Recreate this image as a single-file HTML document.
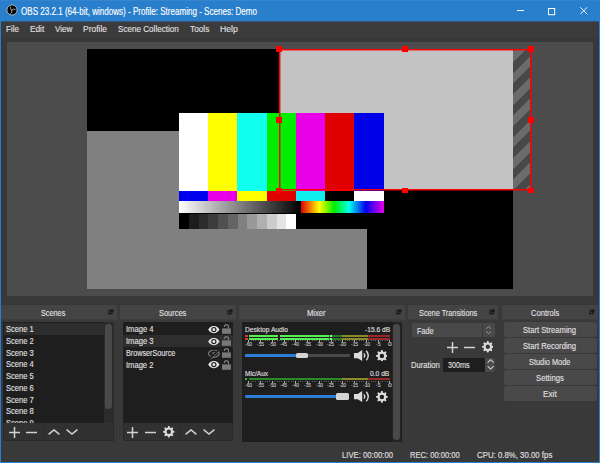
<!DOCTYPE html>
<html><head><meta charset="utf-8"><style>
html,body{margin:0;padding:0;width:600px;height:463px;overflow:hidden;background:#3a393a;}
body>div,body>svg{position:absolute;}
.t{font-family:"Liberation Sans", sans-serif;line-height:1;white-space:pre;-webkit-text-stroke:0.12px currentColor;}
</style></head><body>
<div style="left:0px;top:0px;width:600px;height:463px;background:#3a393a;"></div>
<div style="left:0px;top:0px;width:600px;height:21px;background:#2a7fcc;"></div>
<div style="left:0px;top:21px;width:600px;height:1px;background:#33567c;"></div>
<div style="left:1px;top:0px;width:598px;height:1px;background:#3485d0;"></div>
<div style="left:0px;top:0px;width:1px;height:463px;background:#2a7fcc;"></div>
<div style="left:599px;top:0px;width:1px;height:463px;background:#2a7fcc;"></div>
<div style="left:0px;top:462px;width:600px;height:1px;background:#2a7fcc;"></div>
<svg style="position:absolute;left:5.95px;top:4.4px" width="12" height="12" viewBox="0 0 12 12"><circle cx="6" cy="6" r="5.05" fill="#000" stroke="#d8d8d8" stroke-width="0.7"/><path d="M5.5 6.2 Q4.2 5.6 4.6 2.9 M5.8 5.9 Q7.3 4.6 9.3 5.2 M5.9 6.3 Q6.4 8.2 4.8 9.6" stroke="#bdbdbd" stroke-width="0.85" fill="none" stroke-linecap="round"/></svg>
<div class="t" style="left:20.52px;top:6.53px;font-size:10px;color:#fff;letter-spacing:0px;transform:scaleX(0.8055);transform-origin:0 0;">OBS 23.2.1 (64-bit, windows) - Profile: Streaming - Scenes: Demo</div>
<div style="left:517px;top:10px;width:7px;height:1px;background:#fff;"></div>
<svg style="position:absolute;left:548px;top:7.5px" width="8" height="8" viewBox="0 0 8 8"><rect x="0.5" y="0.5" width="6.2" height="6.2" fill="none" stroke="#fff" stroke-width="1"/></svg>
<svg style="position:absolute;left:579.8px;top:7.3px" width="8" height="8" viewBox="0 0 8 8"><path d="M0.3 0.3 L7.2 7.2 M7.2 0.3 L0.3 7.2" stroke="#fff" stroke-width="0.95"/></svg>
<div style="left:1px;top:22px;width:598px;height:16px;background:#3c3b3c;"></div>
<div class="t" style="left:6.21px;top:24.53px;font-size:9.3px;color:#e1e0e1;letter-spacing:0px;transform:scaleX(0.8778);transform-origin:0 0;">File</div>
<div class="t" style="left:29.71px;top:24.53px;font-size:9.3px;color:#e1e0e1;letter-spacing:0px;transform:scaleX(0.8864);transform-origin:0 0;">Edit</div>
<div class="t" style="left:54.72px;top:24.53px;font-size:9.3px;color:#e1e0e1;letter-spacing:0px;transform:scaleX(0.8680);transform-origin:0 0;">View</div>
<div class="t" style="left:82.79px;top:24.53px;font-size:9.3px;color:#e1e0e1;letter-spacing:0px;transform:scaleX(0.9135);transform-origin:0 0;">Profile</div>
<div class="t" style="left:117.71px;top:24.53px;font-size:9.3px;color:#e1e0e1;letter-spacing:0px;transform:scaleX(0.8720);transform-origin:0 0;">Scene Collection</div>
<div class="t" style="left:190.00px;top:24.53px;font-size:9.3px;color:#e1e0e1;letter-spacing:0px;transform:scaleX(0.8922);transform-origin:0 0;">Tools</div>
<div class="t" style="left:220.28px;top:24.53px;font-size:9.3px;color:#e1e0e1;letter-spacing:0px;transform:scaleX(0.9303);transform-origin:0 0;">Help</div>
<div style="left:1px;top:38px;width:598px;height:258px;background:#383838;"></div>
<div style="left:7px;top:42px;width:586px;height:254px;background:#4c4c4c;"></div>
<div style="left:87px;top:49px;width:426px;height:240px;background:#000;"></div>
<div style="left:87px;top:131px;width:280px;height:158px;background:#808080;"></div>
<div style="left:279px;top:49px;width:234px;height:140px;background:#c3c3c3;"></div>
<div style="left:513px;top:49px;width:18px;height:140px;background:repeating-linear-gradient(135deg,#484848 0 2.1px,#6b6b6b 2.1px 9.62px,#484848 9.62px 15.07px);"></div>
<div style="left:179px;top:113px;width:29px;height:78px;background:#fff;"></div>
<div style="left:208px;top:113px;width:29px;height:78px;background:#ffff00;"></div>
<div style="left:237px;top:113px;width:30px;height:78px;background:#11ffee;"></div>
<div style="left:267px;top:113px;width:29px;height:78px;background:#00ee00;"></div>
<div style="left:296px;top:113px;width:29px;height:78px;background:#e800e8;"></div>
<div style="left:325px;top:113px;width:29px;height:78px;background:#e00000;"></div>
<div style="left:354px;top:113px;width:30px;height:78px;background:#0000e8;"></div>
<div style="left:179px;top:191px;width:29px;height:10px;background:#0000ee;"></div>
<div style="left:208px;top:191px;width:29px;height:10px;background:#e800e8;"></div>
<div style="left:237px;top:191px;width:30px;height:10px;background:#ffff00;"></div>
<div style="left:267px;top:191px;width:29px;height:10px;background:#e00000;"></div>
<div style="left:296px;top:191px;width:29px;height:10px;background:#11eeee;"></div>
<div style="left:325px;top:191px;width:29px;height:10px;background:#000;"></div>
<div style="left:354px;top:191px;width:30px;height:10px;background:#fff;"></div>
<div style="left:179px;top:201px;width:205px;height:28px;background:#000;"></div>
<div style="left:179px;top:201px;width:122px;height:12px;background:linear-gradient(90deg,#fff,#000);"></div>
<div style="left:301px;top:201px;width:83px;height:12px;background:linear-gradient(90deg,#e00000,#ffff00 22%,#00ee00 40%,#00ffee 58%,#0000ee 78%,#e800e8);"></div>
<div style="left:179.0px;top:214.4px;width:9.75px;height:14.2px;background:#000;"></div>
<div style="left:188.75px;top:214.4px;width:9.75px;height:14.2px;background:#1c1c1c;"></div>
<div style="left:198.5px;top:214.4px;width:9.75px;height:14.2px;background:#2c2c2c;"></div>
<div style="left:208.25px;top:214.4px;width:9.75px;height:14.2px;background:#3c3c3c;"></div>
<div style="left:218.0px;top:214.4px;width:9.75px;height:14.2px;background:#505050;"></div>
<div style="left:227.75px;top:214.4px;width:9.75px;height:14.2px;background:#646464;"></div>
<div style="left:237.5px;top:214.4px;width:9.75px;height:14.2px;background:#808080;"></div>
<div style="left:247.25px;top:214.4px;width:9.75px;height:14.2px;background:#999999;"></div>
<div style="left:257.0px;top:214.4px;width:9.75px;height:14.2px;background:#b0b0b0;"></div>
<div style="left:266.75px;top:214.4px;width:9.75px;height:14.2px;background:#cccccc;"></div>
<div style="left:276.5px;top:214.4px;width:9.75px;height:14.2px;background:#e4e4e4;"></div>
<div style="left:286.25px;top:214.4px;width:9.75px;height:14.2px;background:#ffffff;"></div>
<div style="left:279px;top:49px;width:252px;height:1px;background:#f00;"></div>
<div style="left:280px;top:50px;width:251px;height:1px;background:rgba(255,0,0,0.45);"></div>
<div style="left:279px;top:189px;width:252px;height:1px;background:#f00;"></div>
<div style="left:279px;top:190px;width:253px;height:1px;background:rgba(255,0,0,0.45);"></div>
<div style="left:279px;top:50px;width:1px;height:139px;background:#f00;"></div>
<div style="left:280px;top:51px;width:1px;height:138px;background:rgba(255,0,0,0.45);"></div>
<div style="left:530px;top:50px;width:1px;height:139px;background:#f00;"></div>
<div style="left:531px;top:49px;width:1px;height:141px;background:rgba(255,0,0,0.45);"></div>
<div style="left:276.34999999999997px;top:46.25px;width:5.7px;height:5.7px;background:#f00;"></div>
<div style="left:402.45px;top:46.25px;width:5.7px;height:5.7px;background:#f00;"></div>
<div style="left:528.35px;top:46.25px;width:5.7px;height:5.7px;background:#f00;"></div>
<div style="left:276.34999999999997px;top:116.85000000000001px;width:5.7px;height:5.7px;background:#f00;"></div>
<div style="left:528.35px;top:116.85000000000001px;width:5.7px;height:5.7px;background:#f00;"></div>
<div style="left:276.34999999999997px;top:187.55px;width:5.7px;height:5.7px;background:#f00;"></div>
<div style="left:402.45px;top:187.55px;width:5.7px;height:5.7px;background:#f00;"></div>
<div style="left:528.35px;top:187.55px;width:5.7px;height:5.7px;background:#f00;"></div>
<div style="left:1px;top:305px;width:116px;height:14px;background:#454445;"></div>
<div style="left:1px;top:319px;width:116px;height:1px;background:#3e3d3e;"></div>
<div style="left:1px;top:304px;width:116px;height:1px;background:#383738;"></div>
<div class="t" style="left:41.26px;top:308.82px;font-size:8.6px;color:#e1e0e1;letter-spacing:0px;transform:scaleX(0.8469);transform-origin:0 0;">Scenes</div>
<svg style="position:absolute;left:108px;top:309.3px" width="6" height="6" viewBox="0 0 6 6"><path d="M2.2 1.0 H4.9 V3.6" stroke="#111" stroke-width="1.1" fill="none"/><rect x="1.0" y="1.9" width="2.8" height="2.9" fill="none" stroke="#111" stroke-width="1.1"/></svg>
<div style="left:120px;top:305px;width:116px;height:14px;background:#454445;"></div>
<div style="left:120px;top:319px;width:116px;height:1px;background:#3e3d3e;"></div>
<div style="left:120px;top:304px;width:116px;height:1px;background:#383738;"></div>
<div class="t" style="left:158.85px;top:308.82px;font-size:8.6px;color:#e1e0e1;letter-spacing:0px;transform:scaleX(0.8657);transform-origin:0 0;">Sources</div>
<svg style="position:absolute;left:227px;top:309.3px" width="6" height="6" viewBox="0 0 6 6"><path d="M2.2 1.0 H4.9 V3.6" stroke="#111" stroke-width="1.1" fill="none"/><rect x="1.0" y="1.9" width="2.8" height="2.9" fill="none" stroke="#111" stroke-width="1.1"/></svg>
<div style="left:239px;top:305px;width:166px;height:14px;background:#454445;"></div>
<div style="left:239px;top:319px;width:166px;height:1px;background:#3e3d3e;"></div>
<div style="left:239px;top:304px;width:166px;height:1px;background:#383738;"></div>
<div class="t" style="left:307.34px;top:308.82px;font-size:8.6px;color:#e1e0e1;letter-spacing:0px;transform:scaleX(0.8855);transform-origin:0 0;">Mixer</div>
<svg style="position:absolute;left:396px;top:309.3px" width="6" height="6" viewBox="0 0 6 6"><path d="M2.2 1.0 H4.9 V3.6" stroke="#111" stroke-width="1.1" fill="none"/><rect x="1.0" y="1.9" width="2.8" height="2.9" fill="none" stroke="#111" stroke-width="1.1"/></svg>
<div style="left:408px;top:305px;width:90px;height:14px;background:#454445;"></div>
<div style="left:408px;top:319px;width:90px;height:1px;background:#3e3d3e;"></div>
<div style="left:408px;top:304px;width:90px;height:1px;background:#383738;"></div>
<div class="t" style="left:418.86px;top:308.82px;font-size:8.6px;color:#e1e0e1;letter-spacing:0px;transform:scaleX(0.8518);transform-origin:0 0;">Scene Transitions</div>
<svg style="position:absolute;left:489px;top:309.3px" width="6" height="6" viewBox="0 0 6 6"><path d="M2.2 1.0 H4.9 V3.6" stroke="#111" stroke-width="1.1" fill="none"/><rect x="1.0" y="1.9" width="2.8" height="2.9" fill="none" stroke="#111" stroke-width="1.1"/></svg>
<div style="left:502px;top:305px;width:96px;height:14px;background:#454445;"></div>
<div style="left:502px;top:319px;width:96px;height:1px;background:#3e3d3e;"></div>
<div style="left:502px;top:304px;width:96px;height:1px;background:#383738;"></div>
<div class="t" style="left:531.35px;top:308.82px;font-size:8.6px;color:#e1e0e1;letter-spacing:0px;transform:scaleX(0.8815);transform-origin:0 0;">Controls</div>
<svg style="position:absolute;left:589px;top:309.3px" width="6" height="6" viewBox="0 0 6 6"><path d="M2.2 1.0 H4.9 V3.6" stroke="#111" stroke-width="1.1" fill="none"/><rect x="1.0" y="1.9" width="2.8" height="2.9" fill="none" stroke="#111" stroke-width="1.1"/></svg>
<div style="left:3px;top:322px;width:111px;height:101px;background:#1f1e1f;"></div>
<div style="left:4px;top:323px;width:100px;height:12px;background:#2f2e2f;"></div>
<div style="left:104px;top:322px;width:10px;height:101px;background:#2d2c2d;"></div>
<div style="left:105px;top:324.3px;width:7.2px;height:85px;background:#4a494a;border-radius:3.6px;"></div>
<div class="t" style="left:5.74px;top:325.03px;font-size:8.7px;color:#e1e0e1;letter-spacing:0px;transform:scaleX(0.8719);transform-origin:0 0;">Scene 1</div>
<div class="t" style="left:5.74px;top:336.80px;font-size:8.7px;color:#e1e0e1;letter-spacing:0px;transform:scaleX(0.8719);transform-origin:0 0;">Scene 2</div>
<div class="t" style="left:5.74px;top:348.57px;font-size:8.7px;color:#e1e0e1;letter-spacing:0px;transform:scaleX(0.8719);transform-origin:0 0;">Scene 3</div>
<div class="t" style="left:5.74px;top:360.34px;font-size:8.7px;color:#e1e0e1;letter-spacing:0px;transform:scaleX(0.8719);transform-origin:0 0;">Scene 4</div>
<div class="t" style="left:5.74px;top:372.11px;font-size:8.7px;color:#e1e0e1;letter-spacing:0px;transform:scaleX(0.8719);transform-origin:0 0;">Scene 5</div>
<div class="t" style="left:5.74px;top:383.88px;font-size:8.7px;color:#e1e0e1;letter-spacing:0px;transform:scaleX(0.8719);transform-origin:0 0;">Scene 6</div>
<div class="t" style="left:5.74px;top:395.65px;font-size:8.7px;color:#e1e0e1;letter-spacing:0px;transform:scaleX(0.8719);transform-origin:0 0;">Scene 7</div>
<div class="t" style="left:5.74px;top:407.42px;font-size:8.7px;color:#e1e0e1;letter-spacing:0px;transform:scaleX(0.8719);transform-origin:0 0;">Scene 8</div>
<div class="t" style="left:5.74px;top:419.19px;font-size:8.7px;color:#e1e0e1;letter-spacing:0px;transform:scaleX(0.8719);transform-origin:0 0;">Scene 9</div>
<div style="left:3px;top:423px;width:111px;height:18px;background:#2a292a;"></div>
<div style="left:4px;top:423px;width:109px;height:17px;background:#323132;"></div>
<div style="left:43px;top:425px;width:1px;height:15px;background:#2a292a;"></div>
<div style="left:123px;top:322px;width:110px;height:101px;background:#1f1e1f;"></div>
<div style="left:123px;top:335px;width:110px;height:12px;background:#2f2e2f;"></div>
<div class="t" style="left:125.64px;top:325.23px;font-size:8.7px;color:#e1e0e1;letter-spacing:0px;transform:scaleX(0.8796);transform-origin:0 0;">Image 4</div>
<div class="t" style="left:125.64px;top:337.03px;font-size:8.7px;color:#e1e0e1;letter-spacing:0px;transform:scaleX(0.8796);transform-origin:0 0;">Image 3</div>
<div class="t" style="left:125.67px;top:348.83px;font-size:8.7px;color:#e1e0e1;letter-spacing:0px;transform:scaleX(0.8314);transform-origin:0 0;">BrowserSource</div>
<div class="t" style="left:125.64px;top:360.63px;font-size:8.7px;color:#e1e0e1;letter-spacing:0px;transform:scaleX(0.8731);transform-origin:0 0;">Image 2</div>
<div style="left:123px;top:423px;width:110px;height:18px;background:#2a292a;"></div>
<div style="left:124px;top:423px;width:108px;height:17px;background:#323132;"></div>
<div style="left:179.4px;top:425px;width:1px;height:15px;background:#2a292a;"></div>
<svg style="position:absolute;left:8.5px;top:426.5px" width="11" height="11" viewBox="0 0 11 11"><path d="M0 5.5 H11 M5.5 0 V11" stroke="#d2d2d2" stroke-width="1.5"/></svg>
<svg style="position:absolute;left:26.0px;top:426.5px" width="11" height="11" viewBox="0 0 11 11"><path d="M0 5.5 H11" stroke="#d2d2d2" stroke-width="1.5"/></svg>
<svg style="position:absolute;left:48px;top:429px" width="12" height="6.5" viewBox="0 0 12 6.5"><path d="M0.6 5.4 L6 0.9 L11.4 5.4" stroke="#d2d2d2" stroke-width="1.5" fill="none"/></svg>
<svg style="position:absolute;left:66px;top:429px" width="12" height="6.5" viewBox="0 0 12 6.5"><path d="M0.6 0.6 L6 5.1 L11.4 0.6" stroke="#d2d2d2" stroke-width="1.5" fill="none"/></svg>
<svg style="position:absolute;left:127.0px;top:426.5px" width="11" height="11" viewBox="0 0 11 11"><path d="M0 5.5 H11 M5.5 0 V11" stroke="#d2d2d2" stroke-width="1.5"/></svg>
<svg style="position:absolute;left:145.2px;top:426.5px" width="11" height="11" viewBox="0 0 11 11"><path d="M0 5.5 H11" stroke="#d2d2d2" stroke-width="1.5"/></svg>
<svg style="position:absolute;left:163.29999999999998px;top:426.09999999999997px" width="11.6" height="11.6" viewBox="0 0 11.6 11.6"><polygon points="4.48,1.96 5.16,0.04 6.44,0.04 7.12,1.96 7.59,2.15 9.43,1.27 10.33,2.17 9.45,4.01 9.64,4.48 11.56,5.16 11.56,6.44 9.64,7.12 9.45,7.59 10.33,9.43 9.43,10.33 7.59,9.45 7.12,9.64 6.44,11.56 5.16,11.56 4.48,9.64 4.01,9.45 2.17,10.33 1.27,9.43 2.15,7.59 1.96,7.12 0.04,6.44 0.04,5.16 1.96,4.48 2.15,4.01 1.27,2.17 2.17,1.27 4.01,2.15" fill="#dcdcdc"/><circle cx="5.8" cy="5.8" r="4.06" fill="#dcdcdc"/><circle cx="5.8" cy="5.8" r="2.2039999999999997" fill="#323132"/></svg>
<svg style="position:absolute;left:185px;top:429px" width="12" height="6.5" viewBox="0 0 12 6.5"><path d="M0.6 5.4 L6 0.9 L11.4 5.4" stroke="#d2d2d2" stroke-width="1.5" fill="none"/></svg>
<svg style="position:absolute;left:203px;top:429px" width="12" height="6.5" viewBox="0 0 12 6.5"><path d="M0.6 0.6 L6 5.1 L11.4 0.6" stroke="#d2d2d2" stroke-width="1.5" fill="none"/></svg>
<svg style="position:absolute;left:208.25px;top:326.0px" width="11.7" height="10" viewBox="0 0 11.7 10"><path d="M0.2 3.6 C1.6 0.9 3.8 -0.1 5.85 -0.1 C7.9 -0.1 10.1 0.9 11.5 3.6 C10.1 6.3 7.9 7.3 5.85 7.3 C3.8 7.3 1.6 6.3 0.2 3.6 Z" fill="#e6e6e6"/><circle cx="5.85" cy="3.6" r="2.1" fill="none" stroke="#1f1e1f" stroke-width="1.15"/></svg>
<svg style="position:absolute;left:222.1px;top:324.1px" width="9" height="10" viewBox="0 0 9 10"><rect x="0" y="4.4" width="8.9" height="5.4" fill="#7a797a"/><path d="M2.4 2.9 Q2.4 0.65 4.35 0.65 Q6.5 0.65 6.5 2.9 V4.6" stroke="#7a797a" stroke-width="1.3" fill="none"/></svg>
<svg style="position:absolute;left:208.25px;top:337.8px" width="11.7" height="10" viewBox="0 0 11.7 10"><path d="M0.2 3.6 C1.6 0.9 3.8 -0.1 5.85 -0.1 C7.9 -0.1 10.1 0.9 11.5 3.6 C10.1 6.3 7.9 7.3 5.85 7.3 C3.8 7.3 1.6 6.3 0.2 3.6 Z" fill="#e6e6e6"/><circle cx="5.85" cy="3.6" r="2.1" fill="none" stroke="#1f1e1f" stroke-width="1.15"/></svg>
<svg style="position:absolute;left:222.1px;top:335.90000000000003px" width="9" height="10" viewBox="0 0 9 10"><rect x="0" y="4.4" width="8.9" height="5.4" fill="#7a797a"/><path d="M2.4 2.9 Q2.4 0.65 4.35 0.65 Q6.5 0.65 6.5 2.9 V4.6" stroke="#7a797a" stroke-width="1.3" fill="none"/></svg>
<svg style="position:absolute;left:208.25px;top:349.6px" width="11.7" height="10" viewBox="0 0 11.7 10"><path d="M0.2 3.6 C1.6 0.9 3.8 -0.1 5.85 -0.1 C7.9 -0.1 10.1 0.9 11.5 3.6 C10.1 6.3 7.9 7.3 5.85 7.3 C3.8 7.3 1.6 6.3 0.2 3.6 Z" fill="none" stroke="#747374" stroke-width="1.3"/><circle cx="5.85" cy="3.6" r="1.5" fill="#747374"/><path d="M1.6 8.6 L10.6 0.4" stroke="#1f1e1f" stroke-width="1.8"/><path d="M2.4 9.4 L11.4 1.2" stroke="#747374" stroke-width="0.9"/></svg>
<svg style="position:absolute;left:222.1px;top:347.70000000000005px" width="9" height="10" viewBox="0 0 9 10"><rect x="0" y="4.4" width="8.9" height="5.4" fill="#7a797a"/><path d="M2.4 2.9 Q2.4 0.65 4.35 0.65 Q6.5 0.65 6.5 2.9 V4.6" stroke="#7a797a" stroke-width="1.3" fill="none"/></svg>
<svg style="position:absolute;left:208.25px;top:361.4px" width="11.7" height="10" viewBox="0 0 11.7 10"><path d="M0.2 3.6 C1.6 0.9 3.8 -0.1 5.85 -0.1 C7.9 -0.1 10.1 0.9 11.5 3.6 C10.1 6.3 7.9 7.3 5.85 7.3 C3.8 7.3 1.6 6.3 0.2 3.6 Z" fill="#e6e6e6"/><circle cx="5.85" cy="3.6" r="2.1" fill="none" stroke="#1f1e1f" stroke-width="1.15"/></svg>
<svg style="position:absolute;left:222.1px;top:359.5px" width="9" height="10" viewBox="0 0 9 10"><rect x="0" y="4.4" width="8.9" height="5.4" fill="#7a797a"/><path d="M2.4 2.9 Q2.4 0.65 4.35 0.65 Q6.5 0.65 6.5 2.9 V4.6" stroke="#7a797a" stroke-width="1.3" fill="none"/></svg>
<div style="left:242px;top:322px;width:160px;height:119.8px;background:#1f1e1f;"></div>
<div style="left:392px;top:322px;width:9px;height:119.8px;background:#252425;"></div>
<div style="left:393.2px;top:324.1px;width:7.1px;height:116px;background:#4a494a;border-radius:3.55px;"></div>
<div class="t" style="left:244.90px;top:326.17px;font-size:7.6px;color:#e1e0e1;letter-spacing:0px;transform:scaleX(0.8765);transform-origin:0 0;">Desktop Audio</div>
<div class="t" style="left:364.60px;top:326.17px;font-size:7.6px;color:#e1e0e1;letter-spacing:0px;transform:scaleX(0.8787);transform-origin:0 0;">-15.6 dB</div>
<div class="t" style="left:245.31px;top:370.17px;font-size:7.6px;color:#e1e0e1;letter-spacing:0px;transform:scaleX(0.8520);transform-origin:0 0;">Mic/Aux</div>
<div class="t" style="left:370.20px;top:370.17px;font-size:7.6px;color:#e1e0e1;letter-spacing:0px;transform:scaleX(0.8801);transform-origin:0 0;">0.0 dB</div>
<div style="left:248.7px;top:334.7px;width:93.5px;height:5px;background:#2a7a2a;"></div>
<div style="left:342.2px;top:334.7px;width:25.80000000000001px;height:5px;background:#8a8a2a;"></div>
<div style="left:368px;top:334.7px;width:21.69999999999999px;height:5px;background:#9a2a2a;"></div>
<div style="left:248.7px;top:334.7px;width:80.60000000000002px;height:5px;background:#55f055;"></div>
<div style="left:278px;top:334.7px;width:2px;height:5px;background:#000;"></div>
<div style="left:330px;top:334.7px;width:2px;height:5px;background:#88ff88;"></div>
<div style="left:248.7px;top:337px;width:141.0px;height:0.7px;background:#1f1e1f;"></div>
<div style="left:245px;top:334.8px;width:2.5px;height:2.2px;background:#e03535;"></div>
<div style="left:245px;top:337.8px;width:2.5px;height:2.2px;background:#e03535;"></div>
<div style="left:248.7px;top:378.2px;width:93.5px;height:2px;background:#2a8a2a;"></div>
<div style="left:342.2px;top:378.2px;width:25.80000000000001px;height:2px;background:#8a8a2a;"></div>
<div style="left:368px;top:378.2px;width:21.69999999999999px;height:2px;background:#9a2a2a;"></div>
<div style="left:245.3px;top:378.2px;width:1.8px;height:2px;background:#30c030;"></div>
<div style="left:248.29999999999998px;top:340.2px;width:0.9px;height:2.3px;background:#b0b0b0;"></div>
<div style="left:250.64999999999998px;top:340.2px;width:0.8px;height:1.1px;background:#606060;"></div>
<div style="left:252.99999999999997px;top:340.2px;width:0.8px;height:1.1px;background:#606060;"></div>
<div style="left:255.35px;top:340.2px;width:0.8px;height:1.1px;background:#606060;"></div>
<div style="left:257.7px;top:340.2px;width:0.8px;height:1.1px;background:#606060;"></div>
<div style="left:260.05px;top:340.2px;width:0.9px;height:2.3px;background:#b0b0b0;"></div>
<div style="left:262.40000000000003px;top:340.2px;width:0.8px;height:1.1px;background:#606060;"></div>
<div style="left:264.75px;top:340.2px;width:0.8px;height:1.1px;background:#606060;"></div>
<div style="left:267.1px;top:340.2px;width:0.8px;height:1.1px;background:#606060;"></div>
<div style="left:269.45px;top:340.2px;width:0.8px;height:1.1px;background:#606060;"></div>
<div style="left:271.8px;top:340.2px;width:0.9px;height:2.3px;background:#b0b0b0;"></div>
<div style="left:274.15000000000003px;top:340.2px;width:0.8px;height:1.1px;background:#606060;"></div>
<div style="left:276.5px;top:340.2px;width:0.8px;height:1.1px;background:#606060;"></div>
<div style="left:278.85px;top:340.2px;width:0.8px;height:1.1px;background:#606060;"></div>
<div style="left:281.2px;top:340.2px;width:0.8px;height:1.1px;background:#606060;"></div>
<div style="left:283.55px;top:340.2px;width:0.9px;height:2.3px;background:#b0b0b0;"></div>
<div style="left:285.90000000000003px;top:340.2px;width:0.8px;height:1.1px;background:#606060;"></div>
<div style="left:288.25px;top:340.2px;width:0.8px;height:1.1px;background:#606060;"></div>
<div style="left:290.6px;top:340.2px;width:0.8px;height:1.1px;background:#606060;"></div>
<div style="left:292.95px;top:340.2px;width:0.8px;height:1.1px;background:#606060;"></div>
<div style="left:295.3px;top:340.2px;width:0.9px;height:2.3px;background:#b0b0b0;"></div>
<div style="left:297.65000000000003px;top:340.2px;width:0.8px;height:1.1px;background:#606060;"></div>
<div style="left:300.0px;top:340.2px;width:0.8px;height:1.1px;background:#606060;"></div>
<div style="left:302.35px;top:340.2px;width:0.8px;height:1.1px;background:#606060;"></div>
<div style="left:304.7px;top:340.2px;width:0.8px;height:1.1px;background:#606060;"></div>
<div style="left:307.05px;top:340.2px;width:0.9px;height:2.3px;background:#b0b0b0;"></div>
<div style="left:309.40000000000003px;top:340.2px;width:0.8px;height:1.1px;background:#606060;"></div>
<div style="left:311.75px;top:340.2px;width:0.8px;height:1.1px;background:#606060;"></div>
<div style="left:314.1px;top:340.2px;width:0.8px;height:1.1px;background:#606060;"></div>
<div style="left:316.45000000000005px;top:340.2px;width:0.8px;height:1.1px;background:#606060;"></div>
<div style="left:318.8px;top:340.2px;width:0.9px;height:2.3px;background:#b0b0b0;"></div>
<div style="left:321.15px;top:340.2px;width:0.8px;height:1.1px;background:#606060;"></div>
<div style="left:323.5px;top:340.2px;width:0.8px;height:1.1px;background:#606060;"></div>
<div style="left:325.85px;top:340.2px;width:0.8px;height:1.1px;background:#606060;"></div>
<div style="left:328.20000000000005px;top:340.2px;width:0.8px;height:1.1px;background:#606060;"></div>
<div style="left:330.55px;top:340.2px;width:0.9px;height:2.3px;background:#b0b0b0;"></div>
<div style="left:332.9px;top:340.2px;width:0.8px;height:1.1px;background:#606060;"></div>
<div style="left:335.25px;top:340.2px;width:0.8px;height:1.1px;background:#606060;"></div>
<div style="left:337.6px;top:340.2px;width:0.8px;height:1.1px;background:#606060;"></div>
<div style="left:339.95000000000005px;top:340.2px;width:0.8px;height:1.1px;background:#606060;"></div>
<div style="left:342.3px;top:340.2px;width:0.9px;height:2.3px;background:#b0b0b0;"></div>
<div style="left:344.65px;top:340.2px;width:0.8px;height:1.1px;background:#606060;"></div>
<div style="left:347.0px;top:340.2px;width:0.8px;height:1.1px;background:#606060;"></div>
<div style="left:349.35px;top:340.2px;width:0.8px;height:1.1px;background:#606060;"></div>
<div style="left:351.70000000000005px;top:340.2px;width:0.8px;height:1.1px;background:#606060;"></div>
<div style="left:354.05px;top:340.2px;width:0.9px;height:2.3px;background:#b0b0b0;"></div>
<div style="left:356.4px;top:340.2px;width:0.8px;height:1.1px;background:#606060;"></div>
<div style="left:358.75px;top:340.2px;width:0.8px;height:1.1px;background:#606060;"></div>
<div style="left:361.1px;top:340.2px;width:0.8px;height:1.1px;background:#606060;"></div>
<div style="left:363.45000000000005px;top:340.2px;width:0.8px;height:1.1px;background:#606060;"></div>
<div style="left:365.8px;top:340.2px;width:0.9px;height:2.3px;background:#b0b0b0;"></div>
<div style="left:368.15px;top:340.2px;width:0.8px;height:1.1px;background:#606060;"></div>
<div style="left:370.5px;top:340.2px;width:0.8px;height:1.1px;background:#606060;"></div>
<div style="left:372.85px;top:340.2px;width:0.8px;height:1.1px;background:#606060;"></div>
<div style="left:375.20000000000005px;top:340.2px;width:0.8px;height:1.1px;background:#606060;"></div>
<div style="left:377.55px;top:340.2px;width:0.9px;height:2.3px;background:#b0b0b0;"></div>
<div style="left:379.9px;top:340.2px;width:0.8px;height:1.1px;background:#606060;"></div>
<div style="left:382.25px;top:340.2px;width:0.8px;height:1.1px;background:#606060;"></div>
<div style="left:384.6px;top:340.2px;width:0.8px;height:1.1px;background:#606060;"></div>
<div style="left:386.95000000000005px;top:340.2px;width:0.8px;height:1.1px;background:#606060;"></div>
<div style="left:389.3px;top:340.2px;width:0.9px;height:2.3px;background:#b0b0b0;"></div>
<div class="t" style="left:245.06px;top:342.36px;font-size:5.6px;color:#c8c8c8;letter-spacing:0px;transform:scaleX(0.8763);transform-origin:0 0;">-60</div>
<div class="t" style="left:256.81px;top:342.36px;font-size:5.6px;color:#c8c8c8;letter-spacing:0px;transform:scaleX(0.8763);transform-origin:0 0;">-55</div>
<div class="t" style="left:268.56px;top:342.36px;font-size:5.6px;color:#c8c8c8;letter-spacing:0px;transform:scaleX(0.8763);transform-origin:0 0;">-50</div>
<div class="t" style="left:280.31px;top:342.36px;font-size:5.6px;color:#c8c8c8;letter-spacing:0px;transform:scaleX(0.8763);transform-origin:0 0;">-45</div>
<div class="t" style="left:292.06px;top:342.36px;font-size:5.6px;color:#c8c8c8;letter-spacing:0px;transform:scaleX(0.8763);transform-origin:0 0;">-40</div>
<div class="t" style="left:303.81px;top:342.36px;font-size:5.6px;color:#c8c8c8;letter-spacing:0px;transform:scaleX(0.8763);transform-origin:0 0;">-35</div>
<div class="t" style="left:315.56px;top:342.36px;font-size:5.6px;color:#c8c8c8;letter-spacing:0px;transform:scaleX(0.8763);transform-origin:0 0;">-30</div>
<div class="t" style="left:327.31px;top:342.36px;font-size:5.6px;color:#c8c8c8;letter-spacing:0px;transform:scaleX(0.8763);transform-origin:0 0;">-25</div>
<div class="t" style="left:339.06px;top:342.36px;font-size:5.6px;color:#c8c8c8;letter-spacing:0px;transform:scaleX(0.8763);transform-origin:0 0;">-20</div>
<div class="t" style="left:350.81px;top:342.36px;font-size:5.6px;color:#c8c8c8;letter-spacing:0px;transform:scaleX(0.8763);transform-origin:0 0;">-15</div>
<div class="t" style="left:362.56px;top:342.36px;font-size:5.6px;color:#c8c8c8;letter-spacing:0px;transform:scaleX(0.8763);transform-origin:0 0;">-10</div>
<div class="t" style="left:375.54px;top:342.36px;font-size:5.6px;color:#c8c8c8;letter-spacing:0px;transform:scaleX(0.9258);transform-origin:0 0;">-5</div>
<div class="t" style="left:387.70px;top:342.36px;font-size:5.6px;color:#c8c8c8;letter-spacing:0px;transform:scaleX(1.1954);transform-origin:0 0;">0</div>
<div style="left:248.29999999999998px;top:380.5px;width:0.9px;height:2.3px;background:#b0b0b0;"></div>
<div style="left:250.64999999999998px;top:380.5px;width:0.8px;height:1.1px;background:#606060;"></div>
<div style="left:252.99999999999997px;top:380.5px;width:0.8px;height:1.1px;background:#606060;"></div>
<div style="left:255.35px;top:380.5px;width:0.8px;height:1.1px;background:#606060;"></div>
<div style="left:257.7px;top:380.5px;width:0.8px;height:1.1px;background:#606060;"></div>
<div style="left:260.05px;top:380.5px;width:0.9px;height:2.3px;background:#b0b0b0;"></div>
<div style="left:262.40000000000003px;top:380.5px;width:0.8px;height:1.1px;background:#606060;"></div>
<div style="left:264.75px;top:380.5px;width:0.8px;height:1.1px;background:#606060;"></div>
<div style="left:267.1px;top:380.5px;width:0.8px;height:1.1px;background:#606060;"></div>
<div style="left:269.45px;top:380.5px;width:0.8px;height:1.1px;background:#606060;"></div>
<div style="left:271.8px;top:380.5px;width:0.9px;height:2.3px;background:#b0b0b0;"></div>
<div style="left:274.15000000000003px;top:380.5px;width:0.8px;height:1.1px;background:#606060;"></div>
<div style="left:276.5px;top:380.5px;width:0.8px;height:1.1px;background:#606060;"></div>
<div style="left:278.85px;top:380.5px;width:0.8px;height:1.1px;background:#606060;"></div>
<div style="left:281.2px;top:380.5px;width:0.8px;height:1.1px;background:#606060;"></div>
<div style="left:283.55px;top:380.5px;width:0.9px;height:2.3px;background:#b0b0b0;"></div>
<div style="left:285.90000000000003px;top:380.5px;width:0.8px;height:1.1px;background:#606060;"></div>
<div style="left:288.25px;top:380.5px;width:0.8px;height:1.1px;background:#606060;"></div>
<div style="left:290.6px;top:380.5px;width:0.8px;height:1.1px;background:#606060;"></div>
<div style="left:292.95px;top:380.5px;width:0.8px;height:1.1px;background:#606060;"></div>
<div style="left:295.3px;top:380.5px;width:0.9px;height:2.3px;background:#b0b0b0;"></div>
<div style="left:297.65000000000003px;top:380.5px;width:0.8px;height:1.1px;background:#606060;"></div>
<div style="left:300.0px;top:380.5px;width:0.8px;height:1.1px;background:#606060;"></div>
<div style="left:302.35px;top:380.5px;width:0.8px;height:1.1px;background:#606060;"></div>
<div style="left:304.7px;top:380.5px;width:0.8px;height:1.1px;background:#606060;"></div>
<div style="left:307.05px;top:380.5px;width:0.9px;height:2.3px;background:#b0b0b0;"></div>
<div style="left:309.40000000000003px;top:380.5px;width:0.8px;height:1.1px;background:#606060;"></div>
<div style="left:311.75px;top:380.5px;width:0.8px;height:1.1px;background:#606060;"></div>
<div style="left:314.1px;top:380.5px;width:0.8px;height:1.1px;background:#606060;"></div>
<div style="left:316.45000000000005px;top:380.5px;width:0.8px;height:1.1px;background:#606060;"></div>
<div style="left:318.8px;top:380.5px;width:0.9px;height:2.3px;background:#b0b0b0;"></div>
<div style="left:321.15px;top:380.5px;width:0.8px;height:1.1px;background:#606060;"></div>
<div style="left:323.5px;top:380.5px;width:0.8px;height:1.1px;background:#606060;"></div>
<div style="left:325.85px;top:380.5px;width:0.8px;height:1.1px;background:#606060;"></div>
<div style="left:328.20000000000005px;top:380.5px;width:0.8px;height:1.1px;background:#606060;"></div>
<div style="left:330.55px;top:380.5px;width:0.9px;height:2.3px;background:#b0b0b0;"></div>
<div style="left:332.9px;top:380.5px;width:0.8px;height:1.1px;background:#606060;"></div>
<div style="left:335.25px;top:380.5px;width:0.8px;height:1.1px;background:#606060;"></div>
<div style="left:337.6px;top:380.5px;width:0.8px;height:1.1px;background:#606060;"></div>
<div style="left:339.95000000000005px;top:380.5px;width:0.8px;height:1.1px;background:#606060;"></div>
<div style="left:342.3px;top:380.5px;width:0.9px;height:2.3px;background:#b0b0b0;"></div>
<div style="left:344.65px;top:380.5px;width:0.8px;height:1.1px;background:#606060;"></div>
<div style="left:347.0px;top:380.5px;width:0.8px;height:1.1px;background:#606060;"></div>
<div style="left:349.35px;top:380.5px;width:0.8px;height:1.1px;background:#606060;"></div>
<div style="left:351.70000000000005px;top:380.5px;width:0.8px;height:1.1px;background:#606060;"></div>
<div style="left:354.05px;top:380.5px;width:0.9px;height:2.3px;background:#b0b0b0;"></div>
<div style="left:356.4px;top:380.5px;width:0.8px;height:1.1px;background:#606060;"></div>
<div style="left:358.75px;top:380.5px;width:0.8px;height:1.1px;background:#606060;"></div>
<div style="left:361.1px;top:380.5px;width:0.8px;height:1.1px;background:#606060;"></div>
<div style="left:363.45000000000005px;top:380.5px;width:0.8px;height:1.1px;background:#606060;"></div>
<div style="left:365.8px;top:380.5px;width:0.9px;height:2.3px;background:#b0b0b0;"></div>
<div style="left:368.15px;top:380.5px;width:0.8px;height:1.1px;background:#606060;"></div>
<div style="left:370.5px;top:380.5px;width:0.8px;height:1.1px;background:#606060;"></div>
<div style="left:372.85px;top:380.5px;width:0.8px;height:1.1px;background:#606060;"></div>
<div style="left:375.20000000000005px;top:380.5px;width:0.8px;height:1.1px;background:#606060;"></div>
<div style="left:377.55px;top:380.5px;width:0.9px;height:2.3px;background:#b0b0b0;"></div>
<div style="left:379.9px;top:380.5px;width:0.8px;height:1.1px;background:#606060;"></div>
<div style="left:382.25px;top:380.5px;width:0.8px;height:1.1px;background:#606060;"></div>
<div style="left:384.6px;top:380.5px;width:0.8px;height:1.1px;background:#606060;"></div>
<div style="left:386.95000000000005px;top:380.5px;width:0.8px;height:1.1px;background:#606060;"></div>
<div style="left:389.3px;top:380.5px;width:0.9px;height:2.3px;background:#b0b0b0;"></div>
<div class="t" style="left:245.06px;top:382.66px;font-size:5.6px;color:#c8c8c8;letter-spacing:0px;transform:scaleX(0.8763);transform-origin:0 0;">-60</div>
<div class="t" style="left:256.81px;top:382.66px;font-size:5.6px;color:#c8c8c8;letter-spacing:0px;transform:scaleX(0.8763);transform-origin:0 0;">-55</div>
<div class="t" style="left:268.56px;top:382.66px;font-size:5.6px;color:#c8c8c8;letter-spacing:0px;transform:scaleX(0.8763);transform-origin:0 0;">-50</div>
<div class="t" style="left:280.31px;top:382.66px;font-size:5.6px;color:#c8c8c8;letter-spacing:0px;transform:scaleX(0.8763);transform-origin:0 0;">-45</div>
<div class="t" style="left:292.06px;top:382.66px;font-size:5.6px;color:#c8c8c8;letter-spacing:0px;transform:scaleX(0.8763);transform-origin:0 0;">-40</div>
<div class="t" style="left:303.81px;top:382.66px;font-size:5.6px;color:#c8c8c8;letter-spacing:0px;transform:scaleX(0.8763);transform-origin:0 0;">-35</div>
<div class="t" style="left:315.56px;top:382.66px;font-size:5.6px;color:#c8c8c8;letter-spacing:0px;transform:scaleX(0.8763);transform-origin:0 0;">-30</div>
<div class="t" style="left:327.31px;top:382.66px;font-size:5.6px;color:#c8c8c8;letter-spacing:0px;transform:scaleX(0.8763);transform-origin:0 0;">-25</div>
<div class="t" style="left:339.06px;top:382.66px;font-size:5.6px;color:#c8c8c8;letter-spacing:0px;transform:scaleX(0.8763);transform-origin:0 0;">-20</div>
<div class="t" style="left:350.81px;top:382.66px;font-size:5.6px;color:#c8c8c8;letter-spacing:0px;transform:scaleX(0.8763);transform-origin:0 0;">-15</div>
<div class="t" style="left:362.56px;top:382.66px;font-size:5.6px;color:#c8c8c8;letter-spacing:0px;transform:scaleX(0.8763);transform-origin:0 0;">-10</div>
<div class="t" style="left:375.54px;top:382.66px;font-size:5.6px;color:#c8c8c8;letter-spacing:0px;transform:scaleX(0.9258);transform-origin:0 0;">-5</div>
<div class="t" style="left:387.70px;top:382.66px;font-size:5.6px;color:#c8c8c8;letter-spacing:0px;transform:scaleX(1.1954);transform-origin:0 0;">0</div>
<div style="left:245px;top:354.3px;width:104.7px;height:2.5px;background:#4a494a;border-radius:1px;"></div>
<div style="left:245px;top:353.8px;width:51px;height:3.4px;background:#2d7ed6;border-radius:1px;"></div>
<div style="left:295.7px;top:352.7px;width:12.6px;height:5.7px;background:#d4d4d4;border-radius:1.5px;"></div>
<div style="left:245px;top:394.6px;width:95px;height:3.4px;background:#2d7ed6;border-radius:1px;"></div>
<div style="left:336.3px;top:393px;width:13px;height:6.9px;background:#d4d4d4;border-radius:1.5px;"></div>
<svg style="position:absolute;left:353.8px;top:350px" width="16" height="11" viewBox="0 0 16 11"><path d="M0 2.9 H3.7 L8.2 0 V11 L3.7 8.3 H0 Z" fill="#dcdcdc"/><path d="M9.9 3.4 Q11.7 5.5 9.9 7.6" stroke="#dcdcdc" stroke-width="1.3" fill="none"/><path d="M12.3 0.7 Q16.2 5.5 12.3 10.3" stroke="#dcdcdc" stroke-width="1.4" fill="none"/></svg>
<svg style="position:absolute;left:353.8px;top:391.3px" width="16" height="11" viewBox="0 0 16 11"><path d="M0 2.9 H3.7 L8.2 0 V11 L3.7 8.3 H0 Z" fill="#dcdcdc"/><path d="M9.9 3.4 Q11.7 5.5 9.9 7.6" stroke="#dcdcdc" stroke-width="1.3" fill="none"/><path d="M12.3 0.7 Q16.2 5.5 12.3 10.3" stroke="#dcdcdc" stroke-width="1.4" fill="none"/></svg>
<svg style="position:absolute;left:375.70000000000005px;top:349.70000000000005px" width="11.8" height="11.8" viewBox="0 0 11.8 11.8"><polygon points="4.56,1.99 5.25,0.04 6.55,0.04 7.24,1.99 7.72,2.19 9.59,1.30 10.50,2.21 9.61,4.08 9.81,4.56 11.76,5.25 11.76,6.55 9.81,7.24 9.61,7.72 10.50,9.59 9.59,10.50 7.72,9.61 7.24,9.81 6.55,11.76 5.25,11.76 4.56,9.81 4.08,9.61 2.21,10.50 1.30,9.59 2.19,7.72 1.99,7.24 0.04,6.55 0.04,5.25 1.99,4.56 2.19,4.08 1.30,2.21 2.21,1.30 4.08,2.19" fill="#dcdcdc"/><circle cx="5.9" cy="5.9" r="4.13" fill="#dcdcdc"/><circle cx="5.9" cy="5.9" r="2.242" fill="#1f1e1f"/></svg>
<svg style="position:absolute;left:375.8px;top:390.8px" width="11.8" height="11.8" viewBox="0 0 11.8 11.8"><polygon points="4.56,1.99 5.25,0.04 6.55,0.04 7.24,1.99 7.72,2.19 9.59,1.30 10.50,2.21 9.61,4.08 9.81,4.56 11.76,5.25 11.76,6.55 9.81,7.24 9.61,7.72 10.50,9.59 9.59,10.50 7.72,9.61 7.24,9.81 6.55,11.76 5.25,11.76 4.56,9.81 4.08,9.61 2.21,10.50 1.30,9.59 2.19,7.72 1.99,7.24 0.04,6.55 0.04,5.25 1.99,4.56 2.19,4.08 1.30,2.21 2.21,1.30 4.08,2.19" fill="#dcdcdc"/><circle cx="5.9" cy="5.9" r="4.13" fill="#dcdcdc"/><circle cx="5.9" cy="5.9" r="2.242" fill="#1f1e1f"/></svg>
<div style="left:411.7px;top:323px;width:83.3px;height:13.8px;background:#4a494a;border-radius:2px;"></div>
<div style="left:481.5px;top:323px;width:0.8px;height:13.8px;background:#3a393a;"></div>
<div class="t" style="left:417.36px;top:326.93px;font-size:8.7px;color:#e1e0e1;letter-spacing:0px;transform:scaleX(0.8370);transform-origin:0 0;">Fade</div>
<svg style="position:absolute;left:486.4px;top:325.6px" width="5.2" height="8.2" viewBox="0 0 5.2 8.2"><path d="M0.4 2.6 L2.6 0.6 L4.8 2.6 M0.4 5.6 L2.6 7.6 L4.8 5.6" stroke="#aaa" stroke-width="0.9" fill="none"/></svg>
<svg style="position:absolute;left:446.5px;top:341.8px" width="11" height="11" viewBox="0 0 11 11"><path d="M0 5.5 H11 M5.5 0 V11" stroke="#d2d2d2" stroke-width="1.5"/></svg>
<svg style="position:absolute;left:464.1px;top:341.8px" width="11" height="11" viewBox="0 0 11 11"><path d="M0 5.5 H11" stroke="#d2d2d2" stroke-width="1.5"/></svg>
<svg style="position:absolute;left:481.8px;top:341.4px" width="11.6" height="11.6" viewBox="0 0 11.6 11.6"><polygon points="4.48,1.96 5.16,0.04 6.44,0.04 7.12,1.96 7.59,2.15 9.43,1.27 10.33,2.17 9.45,4.01 9.64,4.48 11.56,5.16 11.56,6.44 9.64,7.12 9.45,7.59 10.33,9.43 9.43,10.33 7.59,9.45 7.12,9.64 6.44,11.56 5.16,11.56 4.48,9.64 4.01,9.45 2.17,10.33 1.27,9.43 2.15,7.59 1.96,7.12 0.04,6.44 0.04,5.16 1.96,4.48 2.15,4.01 1.27,2.17 2.17,1.27 4.01,2.15" fill="#dcdcdc"/><circle cx="5.8" cy="5.8" r="4.06" fill="#dcdcdc"/><circle cx="5.8" cy="5.8" r="2.2039999999999997" fill="#3a393a"/></svg>
<div class="t" style="left:410.74px;top:360.93px;font-size:8.7px;color:#e1e0e1;letter-spacing:0px;transform:scaleX(0.8772);transform-origin:0 0;">Duration</div>
<div style="left:442.8px;top:357.5px;width:41.8px;height:14.2px;background:#1f1e1f;"></div>
<div class="t" style="left:448.47px;top:360.93px;font-size:8.7px;color:#e1e0e1;letter-spacing:0px;transform:scaleX(0.8313);transform-origin:0 0;">300ms</div>
<div style="left:484.6px;top:357.5px;width:10.4px;height:14.2px;background:#4a494a;border-radius:0 2px 2px 0;"></div>
<svg style="position:absolute;left:486.6px;top:359.2px" width="7.2" height="11" viewBox="0 0 7.2 11"><path d="M0.6 3.6 L3.6 0.7 L6.6 3.6 M0.6 7.2 L3.6 10.1 L6.6 7.2" stroke="#d0d0d0" stroke-width="1.1" fill="none"/></svg>
<div style="left:503.8px;top:322px;width:93.2px;height:15px;background:#4a494a;border-radius:2.5px;"></div>
<div class="t" style="left:523.29px;top:325.83px;font-size:8.7px;color:#e1e0e1;letter-spacing:0px;transform:scaleX(0.8799);transform-origin:0 0;">Start Streaming</div>
<div style="left:503.8px;top:338px;width:93.2px;height:15px;background:#4a494a;border-radius:2.5px;"></div>
<div class="t" style="left:523.29px;top:341.83px;font-size:8.7px;color:#e1e0e1;letter-spacing:0px;transform:scaleX(0.8799);transform-origin:0 0;">Start Recording</div>
<div style="left:503.8px;top:354px;width:93.2px;height:15px;background:#4a494a;border-radius:2.5px;"></div>
<div class="t" style="left:529.16px;top:357.83px;font-size:8.7px;color:#e1e0e1;letter-spacing:0px;transform:scaleX(0.8485);transform-origin:0 0;">Studio Mode</div>
<div style="left:503.8px;top:370px;width:93.2px;height:15px;background:#4a494a;border-radius:2.5px;"></div>
<div class="t" style="left:535.94px;top:373.83px;font-size:8.7px;color:#e1e0e1;letter-spacing:0px;transform:scaleX(0.8861);transform-origin:0 0;">Settings</div>
<div style="left:503.8px;top:386px;width:93.2px;height:15px;background:#4a494a;border-radius:2.5px;"></div>
<div class="t" style="left:543.01px;top:389.83px;font-size:8.7px;color:#e1e0e1;letter-spacing:0px;transform:scaleX(0.9428);transform-origin:0 0;">Exit</div>
<div class="t" style="left:341.64px;top:451.19px;font-size:8.4px;color:#e1e0e1;letter-spacing:0px;transform:scaleX(0.9206);transform-origin:0 0;">LIVE: 00:00:00</div>
<div class="t" style="left:410.04px;top:451.19px;font-size:8.4px;color:#e1e0e1;letter-spacing:0px;transform:scaleX(0.9030);transform-origin:0 0;">REC: 00:00:00</div>
<div class="t" style="left:477.03px;top:451.19px;font-size:8.4px;color:#e1e0e1;letter-spacing:0px;transform:scaleX(0.9352);transform-origin:0 0;">CPU: 0.8%, 30.00 fps</div>
</body></html>
